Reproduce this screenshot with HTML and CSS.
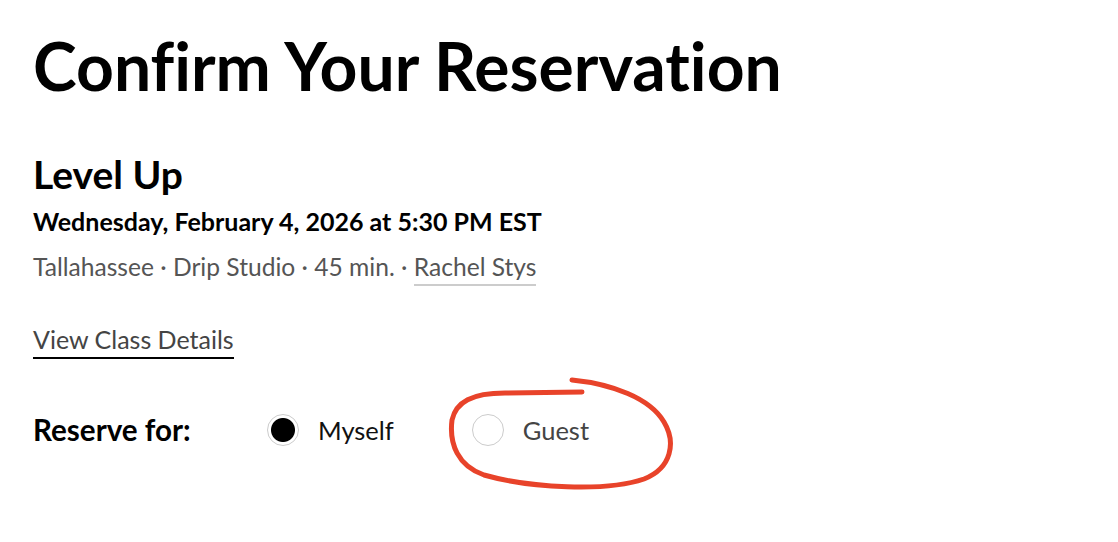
FILE: index.html
```html
<!DOCTYPE html>
<html lang="en">
<head>
<meta charset="utf-8">
<title>Confirm Your Reservation</title>
<link rel="stylesheet" href="styles.css">
</head>
<body>
<main class="page">
  <h1 class="title">Confirm Your Reservation</h1>
  <section class="class-info">
    <h2 class="class-name">Level Up</h2>
    <p class="class-time">Wednesday, February 4, 2026 at 5:30 PM EST</p>
    <p class="class-meta">Tallahassee · Drip Studio · 45 min. · <a class="instructor" href="#">Rachel Stys</a></p>
  </section>
  <a class="details-link" href="#">View Class Details</a>
  <div class="reserve-row">
    <span class="reserve-label">Reserve for:</span>
    <div class="options">
      <label class="option option-selected"><span class="radio radio-checked"></span>Myself</label>
      <label class="option"><span class="radio"></span>Guest</label>
    </div>
  </div>
  <svg class="annotation" width="1118" height="542" viewBox="0 0 1118 542" aria-hidden="true">
    <path d="M572,380 C612,384 650,398 664,422 C676,442 672,468 644,479 C606,492 530,488 484,475 C458,466 449,444 452,420 C456,402 472,393 505,393 L582,392" fill="none" stroke="#e8432a" stroke-width="5" stroke-linecap="round" stroke-linejoin="round"/>
  </svg>
</main>
</body>
</html>
```
FILE: styles.css
```css
html, body {
  margin: 0;
  padding: 0;
  background: #ffffff;
}

.page {
  position: relative;
  padding: 26px 33px 0 33px;
  font-family: Lato, "Noto Sans", sans-serif;
  font-variant-ligatures: none;
  color: #000;
  height: 542px;
  box-sizing: border-box;
}

.title {
  margin: 0;
  font-size: 66px;
  line-height: 80px;
  font-weight: 700;
  letter-spacing: 0;
}

.class-info {
  margin-top: 46px;
}

.class-name {
  margin: 0;
  font-size: 39px;
  line-height: 44px;
  font-weight: 700;
}

.class-time {
  margin: 10px 0 0 0;
  font-size: 25px;
  line-height: 30px;
  font-weight: 700;
}

.class-meta {
  margin: 16px 0 0 0;
  font-size: 24.6px;
  line-height: 30px;
  color: #555;
}

.instructor {
  color: #555;
  text-decoration: none;
  padding-bottom: 3px;
  border-bottom: 2px solid #cccccc;
}

.details-link {
  display: inline-block;
  margin-top: 42px;
  font-size: 25px;
  line-height: 30px;
  color: #444;
  text-decoration: none;
  padding-bottom: 3px;
  border-bottom: 2px solid #000;
}

.reserve-row {
  display: flex;
  align-items: center;
  margin-top: 53px;
}

.reserve-label {
  width: 234px;
  font-size: 29.6px;
  font-weight: 700;
}

.options {
  display: flex;
  align-items: center;
  gap: 78px;
}

.option {
  display: flex;
  align-items: center;
  gap: 19px;
  font-size: 25.5px;
  color: #444;
}

.option-selected {
  color: #111;
}

.radio {
  width: 30px;
  height: 30px;
  border: 1px solid #cccccc;
  border-radius: 50%;
  box-sizing: content-box;
  background: #fff;
  display: inline-block;
}

.radio-checked {
  background: radial-gradient(circle, #000 0 11.5px, #fff 12.5px);
}

.annotation {
  position: absolute;
  left: 0;
  top: 0;
  pointer-events: none;
}
```
